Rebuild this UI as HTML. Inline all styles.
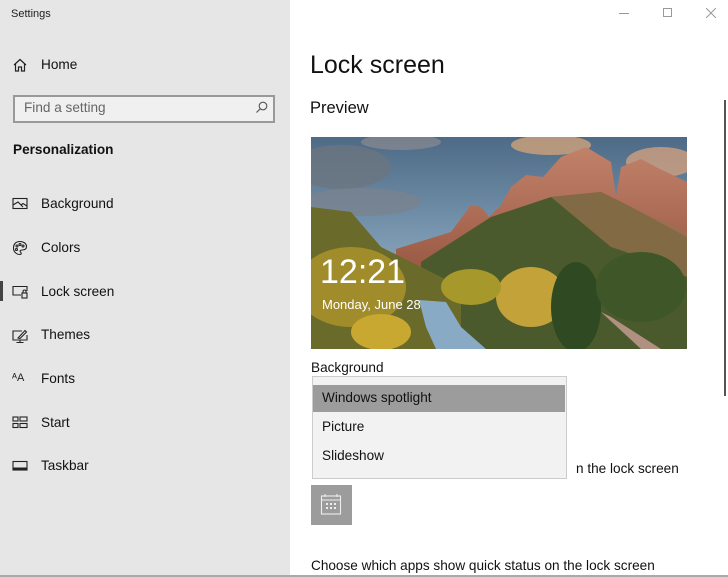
<!DOCTYPE html>
<html><head><style>
*{margin:0;padding:0;box-sizing:border-box}
body{width:728px;height:577px;overflow:hidden;background:#fff;font-family:"Liberation Sans",sans-serif;position:relative;color:#000}
.side{position:absolute;left:0;top:0;width:290px;height:577px;background:#e6e6e6}
.abs{position:absolute;white-space:nowrap}
.nav{position:absolute;left:41px;font-size:13.6px;color:#111}
.ic{position:absolute;left:12px}
.t{font-size:13.6px}
</style></head><body>
<div class="side">
<div class="abs" style="left:11px;top:8px;font-size:11px;color:#222">Settings</div>
<svg class="ic" style="top:57px" width="16" height="16" viewBox="0 0 16 16" fill="none" stroke="#222" stroke-width="1.2"><path d="M2 8 L8 2.5 L14 8 M3.5 7 V14 H6.5 V10 H9.5 V14 H12.5 V7"/></svg>
<div class="nav" style="top:57px">Home</div>
<div class="abs" style="left:13px;top:95px;width:262px;height:28px;border:2px solid #999;background:#f0f0f0"></div>
<div class="abs t" style="left:24px;top:100px;color:#666">Find a setting</div>
<svg class="abs" style="left:255px;top:101px" width="13" height="13" viewBox="0 0 13 13" fill="none" stroke="#555" stroke-width="1.1"><circle cx="8" cy="5" r="3.8"/><path d="M5.2 7.8 L1.5 11.5"/></svg>
<div class="abs t" style="left:13px;top:142px;font-weight:bold;color:#111">Personalization</div>

<svg class="ic" style="top:197px" width="16" height="14" viewBox="0 0 16 14" fill="none" stroke="#222" stroke-width="1.1"><rect x="1" y="1.5" width="14" height="10"/><path d="M1 8 L6 5 L11 10 M9 8 L11 6.5 L15 9"/></svg>
<div class="nav" style="top:196px">Background</div>
<svg class="ic" style="top:240px" width="16" height="16" viewBox="0 0 16 16" fill="none" stroke="#222" stroke-width="1.1"><path d="M8 1.5 C3 1.5 1.5 5 1.5 8 C1.5 12 4.5 14.5 8 14.5 C9.5 14.5 9.5 13 8.5 12 C7.5 11 8.5 10 10 10 C13 10 14.5 9 14.5 6.5 C14.5 3.5 11.5 1.5 8 1.5Z"/><circle cx="5" cy="6" r="1"/><circle cx="8" cy="4.5" r="1"/><circle cx="11" cy="6" r="1"/><circle cx="4.5" cy="9.5" r="1"/></svg>
<div class="nav" style="top:240px">Colors</div>
<div class="abs" style="left:0;top:281px;width:3px;height:20px;background:#444"></div>
<svg class="ic" style="top:285px" width="16" height="14" viewBox="0 0 16 14" fill="none" stroke="#222" stroke-width="1.1"><path d="M9 10 H1 V1.5 H15 V6"/><rect x="10" y="8" width="5" height="5"/><path d="M11 8 V6.5 a1.5 1.5 0 0 1 3 0 V8"/></svg>
<div class="nav" style="top:284px">Lock screen</div>
<svg class="ic" style="top:328px" width="16" height="16" viewBox="0 0 16 16" fill="none" stroke="#222" stroke-width="1.1"><path d="M10 3 H1 V12 H15 V7 M8 12 V14.5 M4.5 14.5 H11.5"/><path d="M6 10 L13 2.5 L14.5 4 L8 10.5 Z"/></svg>
<div class="nav" style="top:327px">Themes</div>
<div class="abs" style="left:12px;top:372px;font-size:11px;color:#222">ᴬA</div>
<div class="nav" style="top:371px">Fonts</div>
<svg class="ic" style="top:416px" width="16" height="13" viewBox="0 0 16 13" fill="none" stroke="#222" stroke-width="1.1"><rect x="1" y="1" width="5" height="4"/><rect x="8" y="1" width="7" height="4"/><rect x="1" y="7.5" width="5" height="4"/><rect x="8" y="7.5" width="7" height="4"/></svg>
<div class="nav" style="top:415px">Start</div>
<svg class="ic" style="top:460px" width="16" height="12" viewBox="0 0 16 12" fill="none" stroke="#222" stroke-width="1.1"><rect x="1" y="1.5" width="14" height="8.5"/><path d="M1 8.5 H15" stroke-width="2"/></svg>
<div class="nav" style="top:458px">Taskbar</div>
</div>

<div class="abs" style="left:619px;top:13px;width:10px;height:1px;background:#999"></div>
<div class="abs" style="left:663px;top:8px;width:9px;height:9px;border:1px solid #999"></div>
<svg class="abs" style="left:706px;top:8px" width="10" height="10" viewBox="0 0 10 10" stroke="#999" stroke-width="1"><path d="M0 0 L10 10 M10 0 L0 10"/></svg>

<div class="abs" style="left:310px;top:51px;font-size:25px;color:#111">Lock screen</div>
<div class="abs" style="left:310px;top:99px;font-size:16.5px;color:#111">Preview</div>
<div class="abs" style="left:724px;top:100px;width:2px;height:296px;background:#555"></div>

<svg class="abs" style="left:311px;top:137px" width="376" height="212" viewBox="0 0 376 212">
<defs>
<linearGradient id="sky" x1="0" y1="0" x2="0" y2="1"><stop offset="0" stop-color="#4d6a86"/><stop offset="0.5" stop-color="#7d9ab3"/><stop offset="1" stop-color="#c4b3a8"/></linearGradient>
<linearGradient id="rock" x1="0" y1="0" x2="0" y2="1"><stop offset="0" stop-color="#c2826a"/><stop offset="1" stop-color="#9a5a45"/></linearGradient>
</defs>
<rect width="376" height="212" fill="url(#sky)"/>
<ellipse cx="30" cy="30" rx="50" ry="22" fill="#6b7580" opacity="0.8"/>
<ellipse cx="50" cy="65" rx="60" ry="14" fill="#7a828c" opacity="0.7"/>
<ellipse cx="240" cy="8" rx="40" ry="10" fill="#d0a27a" opacity="0.8"/>
<ellipse cx="350" cy="25" rx="35" ry="15" fill="#d0a080" opacity="0.8"/>
<ellipse cx="90" cy="5" rx="40" ry="8" fill="#8a8a90" opacity="0.7"/>
<polygon points="85,112 140,95 160,68 170,70 178,80 190,68 200,50 215,38 232,40 250,20 275,10 300,25 305,60 310,30 330,22 345,30 376,45 376,130 85,130" fill="url(#rock)"/>
<polygon points="110,125 180,80 240,60 290,55 320,70 376,100 376,212 110,212" fill="#4b5a2c"/>
<polygon points="240,60 290,55 320,70 376,95 376,140 330,120 300,110" fill="#9a7050" opacity="0.7"/>
<polygon points="0,70 40,75 70,110 110,130 150,150 150,212 0,212" fill="#6a6a2a"/>
<ellipse cx="40" cy="150" rx="55" ry="40" fill="#a08c2a"/>
<ellipse cx="220" cy="160" rx="35" ry="30" fill="#c4a23a"/>
<ellipse cx="160" cy="150" rx="30" ry="18" fill="#a7982c"/>
<ellipse cx="70" cy="195" rx="30" ry="18" fill="#c8a830"/>
<ellipse cx="265" cy="170" rx="25" ry="45" fill="#2f4a22"/>
<ellipse cx="330" cy="150" rx="45" ry="35" fill="#3e5628"/>
<polygon points="108,163 135,165 150,190 175,212 125,212 115,190" fill="#89aac4"/>
<polygon points="290,175 300,180 350,212 330,212" fill="#b09080"/>
<text x="9" y="146" font-family="Liberation Sans" font-size="34" fill="#fff">12:21</text>
<text x="11" y="172" font-family="Liberation Sans" font-size="13" fill="#fff">Monday, June 28</text>
</svg>

<div class="abs t" style="left:311px;top:360px;color:#111">Background</div>
<div class="abs t" style="left:576px;top:461px;color:#111">n the lock screen</div>
<div class="abs" style="left:312px;top:376px;width:255px;height:103px;background:#f2f2f2;border:1px solid #ccc"></div>
<div class="abs" style="left:313px;top:385px;width:252px;height:27px;background:#9c9c9c"></div>
<div class="abs t" style="left:322px;top:390px;color:#111">Windows spotlight</div>
<div class="abs t" style="left:322px;top:419px;color:#111">Picture</div>
<div class="abs t" style="left:322px;top:448px;color:#111">Slideshow</div>
<div class="abs" style="left:311px;top:485px;width:41px;height:40px;background:#9c9c9c"></div>
<svg class="abs" style="left:320px;top:493px" width="22" height="23" viewBox="0 0 22 23" fill="none" stroke="#eee" stroke-width="1.1"><rect x="1.5" y="3" width="19" height="18"/><path d="M1.5 7 H20.5 M5 1 V4 M17 1 V4"/><g fill="#eee" stroke="none"><rect x="6" y="10" width="2" height="2"/><rect x="10" y="10" width="2" height="2"/><rect x="14" y="10" width="2" height="2"/><rect x="6" y="14" width="2" height="2"/><rect x="10" y="14" width="2" height="2"/><rect x="14" y="14" width="2" height="2"/></g></svg>
<div class="abs t" style="left:311px;top:558px;color:#111">Choose which apps show quick status on the lock screen</div>
<div class="abs" style="left:0;top:575px;width:728px;height:2px;background:#aaa"></div>
</body></html>
